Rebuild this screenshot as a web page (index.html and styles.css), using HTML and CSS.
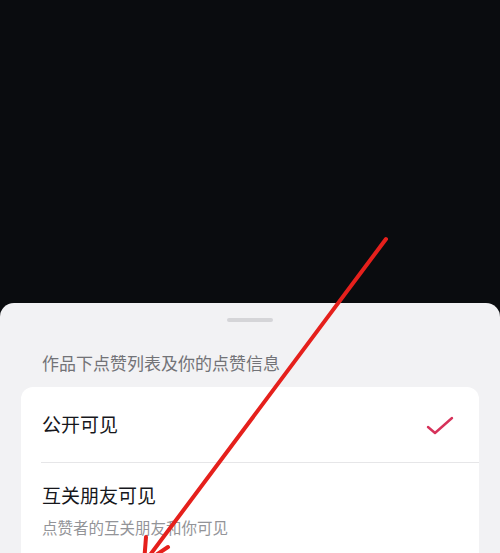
FILE: index.html
```html
<!DOCTYPE html>
<html lang="zh-CN">
<head>
<meta charset="utf-8">
<link rel="stylesheet" href="styles.css">
</head>
<body>
<div class="screen">
  <div class="backdrop"></div>
  <div class="sheet">
    <div class="handle"></div>
    <div class="section-title">作品下点赞列表及你的点赞信息</div>
    <div class="card">
      <div class="row row-first">
        <span class="row-label">公开可见</span>
        <svg class="check" width="28" height="20" viewBox="0 0 28 20">
          <polyline points="2,11 9,17 26,2" fill="none" stroke="#d6325a" stroke-width="2.4" stroke-linecap="round" stroke-linejoin="round"/>
        </svg>
      </div>
      <div class="row row-second">
        <div class="row-label">互关朋友可见</div>
        <div class="row-sub">点赞者的互关朋友和你可见</div>
      </div>
    </div>
  </div>
  <svg class="annotation" width="500" height="553" viewBox="0 0 500 553">
    <line x1="386" y1="239" x2="144" y2="563" stroke="#e5201c" stroke-width="4" stroke-linecap="round"/>
    <line x1="144" y1="563" x2="168" y2="547" stroke="#e5201c" stroke-width="4" stroke-linecap="round"/>
    <line x1="144" y1="563" x2="146" y2="537" stroke="#e5201c" stroke-width="4" stroke-linecap="round"/>
  </svg>
</div>
</body>
</html>
```
FILE: styles.css
```css
html, body {
  margin: 0;
  padding: 0;
  background: #0a0c0f;
}
.screen {
  position: relative;
  width: 500px;
  height: 553px;
  overflow: hidden;
  display: flex;
  flex-direction: column;
  font-family: "Noto Sans CJK SC", "Noto Sans", sans-serif;
  background: #0a0c0f;
}
.backdrop {
  height: 303px;
  flex: none;
  background: #0a0c0f;
}
.sheet {
  flex: 1;
  background: #f2f2f4;
  border-radius: 14px 14px 0 0;
  display: flex;
  flex-direction: column;
}
.handle {
  align-self: center;
  width: 46px;
  height: 4px;
  border-radius: 2px;
  background: #d5d5d8;
  margin-top: 15px;
}
.section-title {
  margin: 29px 0 0 42px;
  font-size: 17px;
  line-height: 24px;
  color: #727377;
}
.card {
  margin: 12px 21px 0 21px;
  background: #ffffff;
  border-radius: 12px 12px 0 0;
  flex: 1;
}
.row {
  padding-left: 21px;
}
.row-first {
  height: 76px;
  display: flex;
  align-items: center;
  justify-content: space-between;
  padding-right: 25px;
  position: relative;
}
.row-first::after {
  content: "";
  position: absolute;
  left: 20px;
  right: 0;
  bottom: 0;
  height: 1px;
  background: #e6e6e8;
}
.row-label {
  font-size: 19px;
  line-height: 26px;
  color: #16171c;
}
.row-first .row-label {
  margin-top: -2px;
}
.check {
  display: block;
  margin-top: 2px;
}
.row-second {
  padding-top: 19px;
}
.row-sub {
  margin-top: 8px;
  font-size: 15.5px;
  line-height: 22px;
  color: #939498;
}
.annotation {
  position: absolute;
  left: 0;
  top: 0;
  pointer-events: none;
}
```
